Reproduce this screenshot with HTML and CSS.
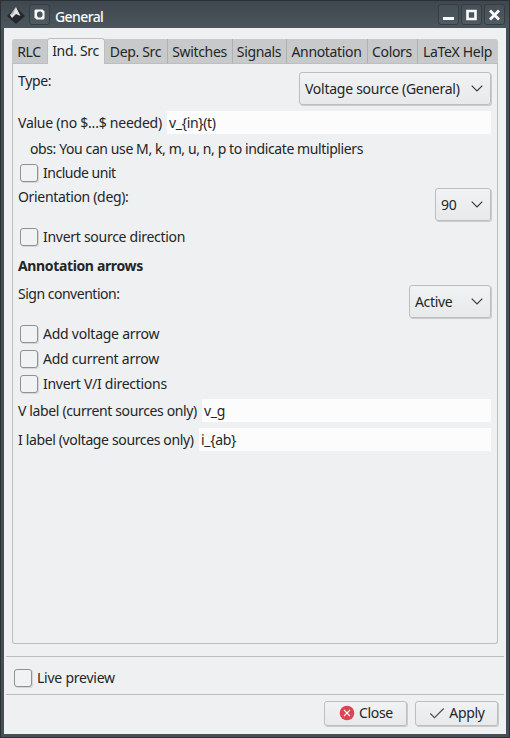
FILE: index.html
```html
<!DOCTYPE html>
<html lang="en">
<head>
<meta charset="utf-8">
<title>General</title>
<link rel="stylesheet" href="styles.css">
</head>
<body>
<div class="window">
  <header class="titlebar">
    <svg class="app-icon" width="18" height="18" viewBox="0 0 18 18"><path d="M9 1 18 10 9 18 0 10Z" fill="#25282b"/><path d="M9 1 13.500 10 9 8 5 12 3 9Z" fill="#e4e4e4"/><path d="M9 1 6 8.500 3 9Z" fill="#aaa"/></svg>
    <span class="tool pin"><svg width="20" height="20" viewBox="0 0 20 20"><path d="M6.500 5.500h7L15.500 7.500v7l-1 1h-7l-2-2v-7Z" fill="#fcfcfc"/><path d="M9.500 7.500h2.500L13.500 9v3L12 13.500H9.500L8 12V9Z" fill="#4b555c"/></svg></span>
    <h1 class="title">General</h1>
    <div class="controls">
      <span class="tool"><svg width="20" height="20" viewBox="0 0 20 20"><path d="M5 13h11v3H5z" fill="#fcfcfc"/></svg></span>
      <span class="tool"><svg width="20" height="20" viewBox="0 0 20 20"><path d="M6.500 7h8v8h-8z" fill="none" stroke="#fcfcfc" stroke-width="2.600"/></svg></span>
      <span class="tool"><svg width="20" height="20" viewBox="0 0 20 20"><path d="m6 6.500 9 9m0-9-9 9" stroke="#fcfcfc" stroke-width="2.800"/></svg></span>
    </div>
  </header>
  <main class="body">
    <nav class="tabs">
      <span class="tab t-rlc">RLC</span><span class="tab t-ind active">Ind. Src</span><span class="tab t-dep">Dep. Src</span><span class="tab t-sw">Switches</span><span class="tab t-sig">Signals</span><span class="tab t-ann">Annotation</span><span class="tab t-col">Colors</span><span class="tab t-tex">LaTeX Help</span>
    </nav>
    <section class="pane">
      <div class="row combo-row"><span>Type:</span><div class="combo wide"><span>Voltage source (General)</span><svg class="chev" width="12" height="7" viewBox="0 0 12 7"><path d="m.7.7 5.300 5.300L11.300.7"/></svg></div></div>
      <div class="row field-row"><label class="loose">Value (no $...$ needed)</label><div class="field f-value">v_{in}(t)</div></div>
      <p class="hint">obs: You can use M, k, m, u, n, p to indicate multipliers</p>
      <div class="check unit"><i class="box"></i><span class="tight">Include unit</span></div>
      <div class="row combo-row orient"><span>Orientation (deg):</span><div class="combo small"><span>90</span><svg class="chev" width="12" height="7" viewBox="0 0 12 7"><path d="m.7.7 5.300 5.300L11.300.7"/></svg></div></div>
      <div class="check invert"><i class="box"></i><span class="even">Invert source direction</span></div>
      <h2 class="heading">Annotation arrows</h2>
      <div class="row combo-row sign"><span class="tight">Sign convention:</span><div class="combo mid"><span>Active</span><svg class="chev" width="12" height="7" viewBox="0 0 12 7"><path d="m.7.7 5.300 5.300L11.300.7"/></svg></div></div>
      <div class="checks">
        <div class="check"><i class="box"></i><span class="loose">Add voltage arrow</span></div>
        <div class="check"><i class="box"></i><span class="loose">Add current arrow</span></div>
        <div class="check"><i class="box"></i><span class="even">Invert V/I directions</span></div>
      </div>
      <div class="row field-row"><label class="snug">V label (current sources only)</label><div class="field f-v">v_g</div></div>
      <div class="row field-row"><label class="snug">I label (voltage sources only)</label><div class="field f-i">i_{ab}</div></div>
    </section>
    <div class="preview"><div class="check"><i class="box"></i><span class="loose">Live preview</span></div></div>
    <footer class="actions">
      <div class="button"><svg width="16" height="16" viewBox="0 0 16 16"><circle cx="8" cy="8" r="7.300" fill="#da4453"/><path d="m5 5 6 6m0-6-6 6" stroke="#fcfcfc" stroke-width="1.100"/></svg><span>Close</span></div>
      <div class="button"><svg width="16" height="16" viewBox="0 0 16 16"><path d="m1.300 8.500 4.200 4.200L14.700 3.500" fill="none" stroke="#4d4d4d" stroke-width="1.100"/></svg><span>Apply</span></div>
    </footer>
  </main>
</div>
</body>
</html>
```

FILE: styles.css
```css
* { box-sizing: border-box; }
body {
  margin: 0;
  font: 14px/18px "Noto Sans", sans-serif;
  letter-spacing: -0.33px;
  color: #232627;
  white-space: nowrap;
}
.loose { letter-spacing: -0.24px; }
.even { letter-spacing: -0.28px; }
.snug { letter-spacing: -0.36px; }
.tight { letter-spacing: -0.49px; }
.window {
  width: 510px;
  height: 738px;
  display: flex;
  flex-direction: column;
  padding: 0 3px 3px;
  background: #454f56;
  border: 1px solid #2b3034;
}
.titlebar {
  height: 27px;
  margin: 0 -3px;
  padding: 3px 4px 3px 6px;
  display: flex;
  align-items: center;
  background: linear-gradient(#3f484f, #4b555c);
  color: #fcfcfc;
}
.tool {
  width: 21px;
  height: 21px;
  border: 1px solid #353e45;
  border-radius: 3px;
  background: linear-gradient(#465057, #4f5960);
}
.tool svg { display: block; margin: -1px 0 0 -1px; }
.pin { margin-left: 4px; }
.title { margin: 4px 0 0 5px; font-size: 14px; font-weight: 500; letter-spacing: -0.6px; }
.controls { display: flex; gap: 2px; margin-left: auto; }
.body {
  flex: 1;
  padding: 10px 8px 8px;
  display: flex;
  flex-direction: column;
  background: #eff0f1;
}
.tabs { display: flex; align-items: flex-end; height: 26px; }
.tab {
  height: 25px;
  padding: 4px 1px 0 0;
  text-align: center;
  background: #c8c9ca;
  border-right: 1px solid #afb0b2;
  border-bottom: 1px solid #bcbec0;
}
.tab.active {
  height: 26px;
  padding-top: 3px;
  background: #eff0f1;
  border: 1px solid #bcbec0;
  border-bottom: 0;
  border-radius: 3px 3px 0 0;
}
.t-rlc { width: 35px; border-radius: 3px 0 0; border-right: 0; }
.t-ind { width: 58px; }
.t-dep { width: 63px; }
.t-sw { width: 65px; }
.t-sig { width: 54px; }
.t-ann { width: 81px; }
.t-col { width: 50px; }
.t-tex { width: 80px; border-right: 0; border-radius: 0 3px 0 0; }
.pane {
  height: 580px;
  padding: 8px 6px 0 5px;
  border: 1px solid #bcbec0;
  border-top: 0;
  border-radius: 0 0 3px 3px;
}
.row { display: flex; }
.combo-row { justify-content: space-between; height: 33px; }
.combo, .button {
  border: 1px solid #bcbec0;
  border-radius: 3px;
  background: linear-gradient(#f1f2f3, #e8e9ea);
  box-shadow: 1px 1px 0 #c9cbcc;
}
.combo {
  height: 33px;
  padding: 0 7px 0 5px;
  display: flex;
  align-items: center;
  justify-content: space-between;
}
.wide { width: 192px; letter-spacing: -0.26px; }
.small { width: 56px; }
.mid { width: 82px; }
.chev path { fill: none; stroke: #31363b; stroke-width: 1.1; }
.field-row { height: 23px; margin-top: 6px; align-items: center; justify-content: space-between; }
.field { height: 23px; padding: 3px 2px 0; background: #fcfcfc; }
.f-value { width: 324px; }
.f-v { width: 289px; }
.f-i { width: 292px; }
.hint { margin: 6px 0 0 12px; letter-spacing: -0.4px; }
.check { display: flex; align-items: center; height: 18px; gap: 5px; margin-left: 2px; }
.box {
  width: 18px;
  height: 18px;
  border: 1px solid #8f9193;
  border-radius: 3px;
  background: #f1f2f3;
  box-shadow: 1px 1px 0 #d5d6d7;
}
.unit { margin-top: 6px; }
.orient { margin-top: 6px; }
.invert { margin-top: 7px; }
.heading { margin: 11px 0 0; font-size: 14px; line-height: 18px; letter-spacing: -0.36px; }
.sign { margin-top: 10px; }
.checks { display: grid; gap: 7px; margin-top: 7px; }
.preview {
  height: 39px;
  margin: 12px -6px 0;
  padding: 12px 6px 0;
  border: solid #bcbec0;
  border-width: 1px 0;
}
.actions { display: flex; justify-content: flex-end; gap: 8px; margin-top: 6px; }
.button {
  width: 83px;
  height: 25px;
  padding: 0 0 1px 1px;
  display: flex;
  align-items: center;
  justify-content: center;
  gap: 4px;
}
```
